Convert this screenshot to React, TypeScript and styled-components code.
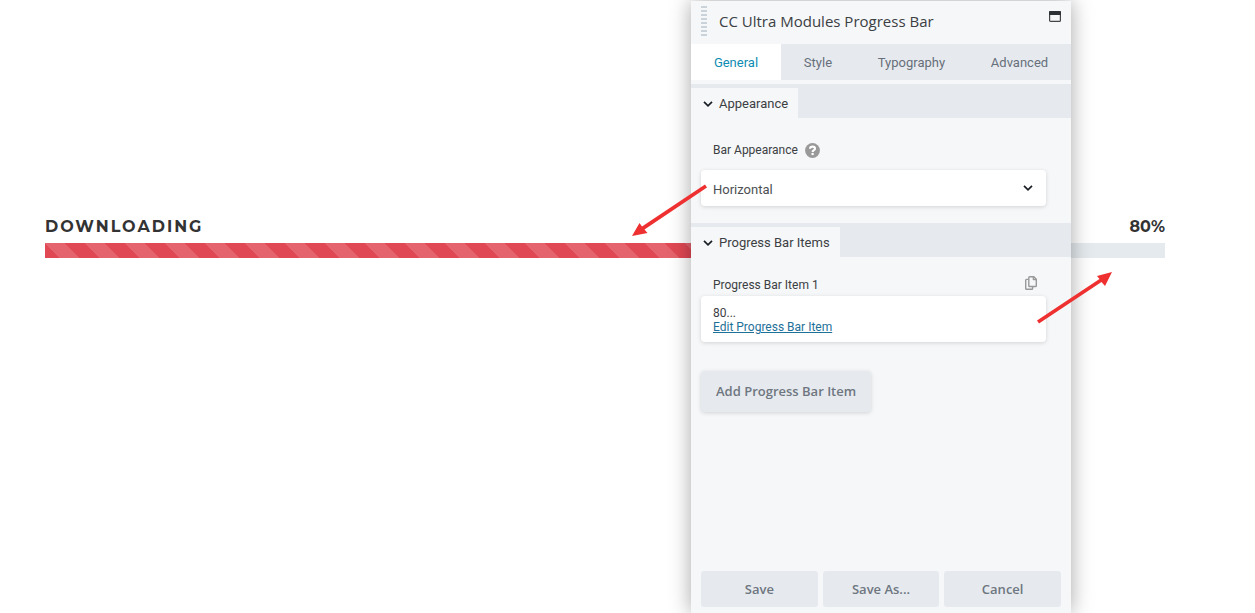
import React from 'react';
import styled, { createGlobalStyle, css } from 'styled-components';

const GlobalStyle = createGlobalStyle`
  * { box-sizing: border-box; }
  body {
    margin: 0;
    background: #fff;
    color: #3c4043;
    font-family: "Segoe UI", Roboto, "Open Sans", sans-serif;
    font-size: 13px;
    line-height: 20px;
  }
  button, select { font: inherit; color: inherit; }
`;

const Page = styled.div`
  position: relative;
  min-height: 100vh;
  overflow: hidden;
`;

const Content = styled.main`
  padding: 217px 90px 0 45px;
`;

const BarHeading = styled.div`
  display: flex;
  justify-content: space-between;
  align-items: center;
  height: 20px;
  margin-bottom: 6px;
  font-family: Montserrat, Inter, sans-serif;
  font-size: 16px;
  font-weight: 700;
  color: #333;
`;

const BarTitle = styled.span`
  letter-spacing: 2px;
  text-transform: uppercase;
`;

const Track = styled.div`
  height: 15px;
  background: #e5eaee;
`;

const Fill = styled.div`
  height: 100%;
  background-color: #e04854;
  background-image: linear-gradient(
    45deg,
    rgba(255, 255, 255, 0.15) 25%,
    transparent 25%,
    transparent 50%,
    rgba(255, 255, 255, 0.15) 50%,
    rgba(255, 255, 255, 0.15) 75%,
    transparent 75%
  );
  background-size: 40px 40px;
`;

const Panel = styled.aside`
  position: absolute;
  top: 1px;
  bottom: 0;
  right: 184px;
  width: 380px;
  display: flex;
  flex-direction: column;
  background: #f5f7f9;
  box-shadow: 0 0 20px rgba(0, 0, 0, 0.35);
`;

const Header = styled.header`
  display: flex;
  align-items: flex-start;
  height: 43px;
  padding: 5px 10px 0;
`;

const Grip = styled.span`
  width: 6px;
  height: 30px;
  margin-right: 12px;
  background: repeating-linear-gradient(#cbd3da 0 2px, transparent 2px 4px);
`;

const Title = styled.h1`
  flex: 1;
  margin: 0;
  padding-top: 5px;
  font-family: "Segoe UI", "Open Sans", sans-serif;
  font-size: 15px;
  line-height: 20px;
  font-weight: 400;
`;

const IconButton = styled.button`
  display: flex;
  padding: 0;
  border: 0;
  background: none;
  cursor: pointer;
`;

const WindowButton = styled(IconButton)`
  margin-top: 5px;
`;

const CopyButton = styled(IconButton)`
  padding-bottom: 4px;
`;

const Tabs = styled.nav`
  display: flex;
  height: 36px;
  margin-bottom: 4px;
  background: #e6eaef;
`;

const Tab = styled.button<{ $active?: boolean }>`
  flex: 1 1 auto;
  padding: 2px 20px 0;
  border: 0;
  background: ${(p) => (p.$active ? '#fff' : 'transparent')};
  color: ${(p) => (p.$active ? '#0e8cb3' : '#676f7a')};
  cursor: pointer;
`;

const SectionBar = styled.div`
  display: flex;
  height: 34px;
  padding-top: 4px;
  background: #e6eaef;
`;

const SectionTab = styled.button`
  display: flex;
  align-items: center;
  gap: 6px;
  padding: 2px 10px 0 12px;
  border: 0;
  background: #f5f7f9;
  cursor: pointer;
`;

const SectionBody = styled.div<{ $top: number }>`
  padding: ${(p) => p.$top}px 25px 17px 10px;
`;

const LabelRow = styled.div`
  display: flex;
  align-items: center;
  gap: 7px;
  height: 20px;
  padding: 0 9px 0 12px;
  font-size: 12px;
`;

const Spacer = styled.span`
  flex: 1;
`;

const surface = css`
  background: #fff;
  border-radius: 4px;
  box-shadow: 0 1px 4px rgba(0, 0, 0, 0.15);
`;

const SelectWrap = styled.div`
  ${surface}
  display: grid;
  align-items: center;
  margin-top: 10px;
  > * { grid-area: 1 / 1; }
  > svg { justify-self: end; margin-right: 13px; pointer-events: none; }
`;

const Select = styled.select`
  width: 100%;
  height: 36px;
  padding: 3px 32px 0 12px;
  border: 0;
  background: none;
  appearance: none;
  color: #4b4f52;
`;

const ItemCard = styled.div`
  ${surface}
  display: flex;
  flex-direction: column;
  align-items: flex-start;
  margin: 1px 0 29px;
  padding: 10px 12px 8px;
  font-size: 12px;
  line-height: 14px;
`;

const EditLink = styled.a`
  color: #1d7199;
`;

const Button = styled.button`
  height: 36px;
  padding: 0 14px;
  border: 0;
  border-radius: 3px;
  background: #e6eaef;
  color: #6e7680;
  font-family: "Segoe UI", "Open Sans", sans-serif;
  font-size: 13px;
  font-weight: 600;
  cursor: pointer;
`;

const AddButton = styled(Button)`
  height: 41px;
  padding: 0 15px 2px;
  border-radius: 4px;
  box-shadow: 0 1px 4px rgba(0, 0, 0, 0.15);
`;

const Footer = styled.footer`
  display: grid;
  grid-template-columns: repeat(3, 1fr);
  gap: 5px;
  margin-top: auto;
  padding: 0 10px 6px;
`;

const Arrow = styled.svg<{ $left: number; $top: number }>`
  position: absolute;
  left: ${(p) => p.$left}px;
  top: ${(p) => p.$top}px;
  pointer-events: none;
`;

const Chevron = () => (
  <svg width="10" height="8" viewBox="0 0 10 8" fill="none" stroke="#191e23" strokeWidth="1.7" aria-hidden="true">
    <path d="M1 1.8 5 5.8 9 1.8" />
  </svg>
);

const HelpIcon = () => (
  <svg width="15" height="15" viewBox="0 0 15 15" role="img" aria-label="Help">
    <circle cx="7.5" cy="7.5" r="7.4" fill="#999" />
    <path d="M5 5.8C5.1 4.3 6.1 3.6 7.5 3.6S10 4.4 10 5.7C10 7.1 7.6 7.2 7.6 8.9" fill="none" stroke="#fff" strokeWidth="2.1" />
    <rect x="6.5" y="9.9" width="2.2" height="2.2" fill="#fff" />
  </svg>
);

const CopyIcon = () => (
  <svg width="12" height="14" viewBox="0 0 12 14" fill="none" stroke="#999" strokeWidth="1.4" strokeLinejoin="round" aria-hidden="true">
    <path d="M4.6.8h4.2l2.5 2.5v6.400a.8.8 0 0 1-.8.8H4.600a.8.8 0 0 1-.8-.8V1.600a.8.8 0 0 1 .8-.8Z" />
    <path d="M8.400.8v2.800h2.800M3.800 3.400H1.500a.8.8 0 0 0-.8.8v8.200a.8.8 0 0 0 .8.8h5.300a.8.8 0 0 0 .8-.8v-2" />
  </svg>
);

const WindowIcon = () => (
  <svg width="12" height="11" viewBox="0 0 12 11" aria-hidden="true">
    <rect x="0.6" y="0.6" width="10.8" height="9.8" rx="1" fill="none" stroke="#444" strokeWidth="1.2" />
    <path d="M0 1a1 1 0 0 1 1-1h10a1 1 0 0 1 1 1v3H0Z" fill="#2d3135" />
  </svg>
);

const Section = ({ title, top, children }: { title: string; top: number; children: React.ReactNode }) => (
  <section>
    <SectionBar>
      <SectionTab type="button" aria-expanded="true">
        <Chevron />
        {title}
      </SectionTab>
    </SectionBar>
    <SectionBody $top={top}>{children}</SectionBody>
  </section>
);

const tabs = ['General', 'Style', 'Typography', 'Advanced'];
const progress = 80;

export default function App() {
  return (
    <Page>
      <GlobalStyle />
      <Content>
        <BarHeading>
          <BarTitle>Downloading</BarTitle>
          <span>{progress}%</span>
        </BarHeading>
        <Track role="progressbar" aria-label="Downloading" aria-valuenow={progress}>
          <Fill style={{ width: `${progress}%` }} />
        </Track>
      </Content>

      <Panel>
        <Header>
          <Grip />
          <Title>CC Ultra Modules Progress Bar</Title>
          <WindowButton type="button" aria-label="Expand window">
            <WindowIcon />
          </WindowButton>
        </Header>
        <Tabs>
          {tabs.map((tab, i) => (
            <Tab key={tab} type="button" $active={i === 0}>
              {tab}
            </Tab>
          ))}
        </Tabs>

        <Section title="Appearance" top={22}>
          <LabelRow>
            <label htmlFor="bar-appearance">Bar Appearance</label>
            <HelpIcon />
          </LabelRow>
          <SelectWrap>
            <Select id="bar-appearance" defaultValue="horizontal">
              <option value="horizontal">Horizontal</option>
            </Select>
            <Chevron />
          </SelectWrap>
        </Section>

        <Section title="Progress Bar Items" top={18}>
          <LabelRow>
            Progress Bar Item 1
            <Spacer />
            <CopyButton type="button" aria-label="Duplicate item">
              <CopyIcon />
            </CopyButton>
          </LabelRow>
          <ItemCard>
            <span>80...</span>
            <EditLink href="#edit">Edit Progress Bar Item</EditLink>
          </ItemCard>
          <AddButton type="button">Add Progress Bar Item</AddButton>
        </Section>

        <Footer>
          <Button type="button">Save</Button>
          <Button type="button">Save As...</Button>
          <Button type="button">Cancel</Button>
        </Footer>

        <Arrow $left={-60} $top={182} width="80" height="56" viewBox="0 0 80 56" aria-hidden="true">
          <path d="M74 1.5 76 4.5 13.5 46.5 16.5 50 1 53 8.5 40 11 43.5Z" fill="#ee3030" />
        </Arrow>
        <Arrow $left={345} $top={268} width="80" height="56" viewBox="0 0 80 56" aria-hidden="true">
          <path d="M1 51.5 3 54.5 65.5 13 69 17 76 3 61 7 63.5 10Z" fill="#ee3030" />
        </Arrow>
      </Panel>
    </Page>
  );
}
